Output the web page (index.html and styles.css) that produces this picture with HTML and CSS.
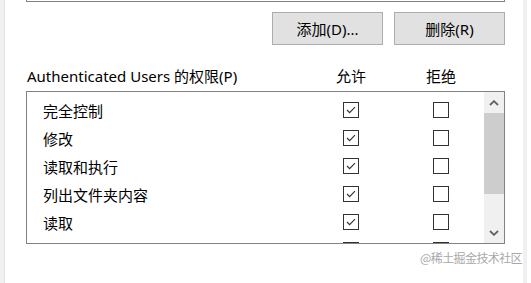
FILE: index.html
```html
<!DOCTYPE html>
<html lang="zh-CN">
<head>
    <meta charset="UTF-8">
    <title>权限</title>
    <link rel="stylesheet" href="styles.css">
</head>
<body>
    <div class="window">
        <div class="edge-left"></div>

        <div class="main">
            <div class="group-list"></div>

            <div class="buttons">
                <button>添加(D)...</button>
                <button>删除(R)</button>
            </div>

            <div class="perm-header">
                <span class="perm-title">Authenticated Users 的权限(P)</span>
                <span class="col">允许</span>
                <span class="col">拒绝</span>
            </div>

            <div class="perm-box">
                <div class="rows">
                    <div class="row">
                        <span class="name">完全控制</span>
                        <span class="col"><span class="box checked"></span></span>
                        <span class="col"><span class="box"></span></span>
                    </div>
                    <div class="row">
                        <span class="name">修改</span>
                        <span class="col"><span class="box checked"></span></span>
                        <span class="col"><span class="box"></span></span>
                    </div>
                    <div class="row">
                        <span class="name">读取和执行</span>
                        <span class="col"><span class="box checked"></span></span>
                        <span class="col"><span class="box"></span></span>
                    </div>
                    <div class="row">
                        <span class="name">列出文件夹内容</span>
                        <span class="col"><span class="box checked"></span></span>
                        <span class="col"><span class="box"></span></span>
                    </div>
                    <div class="row">
                        <span class="name">读取</span>
                        <span class="col"><span class="box checked"></span></span>
                        <span class="col"><span class="box"></span></span>
                    </div>
                    <!-- next row, only its boxes peek in above the bottom edge -->
                    <div class="row">
                        <span class="name"></span>
                        <span class="col"><span class="box"></span></span>
                        <span class="col"><span class="box"></span></span>
                    </div>
                </div>

                <div class="scrollbar">
                    <div class="arrow">
                        <svg width="10" height="6" viewBox="0 0 10 6"><path d="M1 5 L5 1.2 L9 5" fill="none" stroke="#606060" stroke-width="1.8"/></svg>
                    </div>
                    <div class="thumb"></div>
                    <div class="track"></div>
                    <div class="arrow">
                        <svg width="10" height="6" viewBox="0 0 10 6"><path d="M1 1 L5 4.8 L9 1" fill="none" stroke="#606060" stroke-width="1.8"/></svg>
                    </div>
                </div>
            </div>
        </div>

        <div class="edge-right"></div>
    </div>

    <div class="watermark">@稀土掘金技术社区</div>
</body>
</html>
```

FILE: styles.css
```css
body {
    margin: 0;
    padding: 0;
    background-color: #fff;
    font-family: "Noto Sans", "Noto Sans CJK SC", sans-serif;
    font-size: 15px;
    color: #000;
    position: relative;
    width: 531px;
    height: 283px;
    overflow: hidden;
}
.window {
    display: flex;
    height: 283px;
}
.edge-left {
    width: 4px;
    background-color: #f0f0f0;
    border-right: 1px solid #e3e3e3;
}
.edge-right {
    width: 4px;
    margin-right: 4px;
    background-color: #f0f0f0;
}
.main {
    flex: 1;
    padding: 0 18px 0 21px;
}
.group-list {
    height: 1px;
    border: 1px solid #828282;
    border-top: none;
}
.buttons {
    display: flex;
    justify-content: flex-end;
    gap: 11px;
    margin-top: 10px;
}
.buttons button {
    width: 111px;
    height: 33px;
    padding: 0;
    background-color: #e1e1e1;
    border: 1px solid #adadad;
    font-family: "Noto Sans", "Noto Sans CJK SC", sans-serif;
    font-size: 15px;
    color: #000;
    line-height: 20px;
}
.perm-header {
    display: grid;
    grid-template-columns: 1fr 60px 60px;
    column-gap: 30px;
    margin-top: 21px;
    padding: 0 34px 0 1px;
    line-height: 20px;
    height: 20px;
}
.col {
    display: flex;
    justify-content: center;
    align-items: center;
}
.perm-box {
    display: flex;
    height: 151px;
    margin-top: 5px;
    border: 1px solid #828282;
    overflow: hidden;
}
.rows {
    flex: 1;
    padding: 4px 13px 0 16px;
    overflow: hidden;
}
.row {
    display: grid;
    grid-template-columns: 1fr 60px 60px;
    column-gap: 30px;
    height: 28px;
    align-items: center;
    line-height: 20px;
}
.name {
    padding-top: 1px;
}
.box {
    display: block;
    width: 14px;
    height: 14px;
    border: 1px solid #333;
    background-color: #fff;
}
.box.checked {
    background-image: url("data:image/svg+xml;utf8,<svg xmlns='http://www.w3.org/2000/svg' width='14' height='14' viewBox='0 0 14 14'><path d='M3 7 L5.6 9.6 L11 4.2' fill='none' stroke='%23333' stroke-width='1.2'/></svg>");
}
.scrollbar {
    width: 20px;
    display: flex;
    flex-direction: column;
    background-color: #f0f0f0;
}
.arrow {
    height: 21px;
    display: flex;
    align-items: center;
    justify-content: center;
}
.thumb {
    height: 81px;
    background-color: #cdcdcd;
}
.track {
    flex: 1;
}
.watermark {
    position: absolute;
    right: 9px;
    bottom: 18px;
    font-family: "Noto Sans CJK SC", sans-serif;
    font-size: 12px;
    line-height: 14px;
    color: #a8a8a8;
    letter-spacing: -0.6px;
}
```
